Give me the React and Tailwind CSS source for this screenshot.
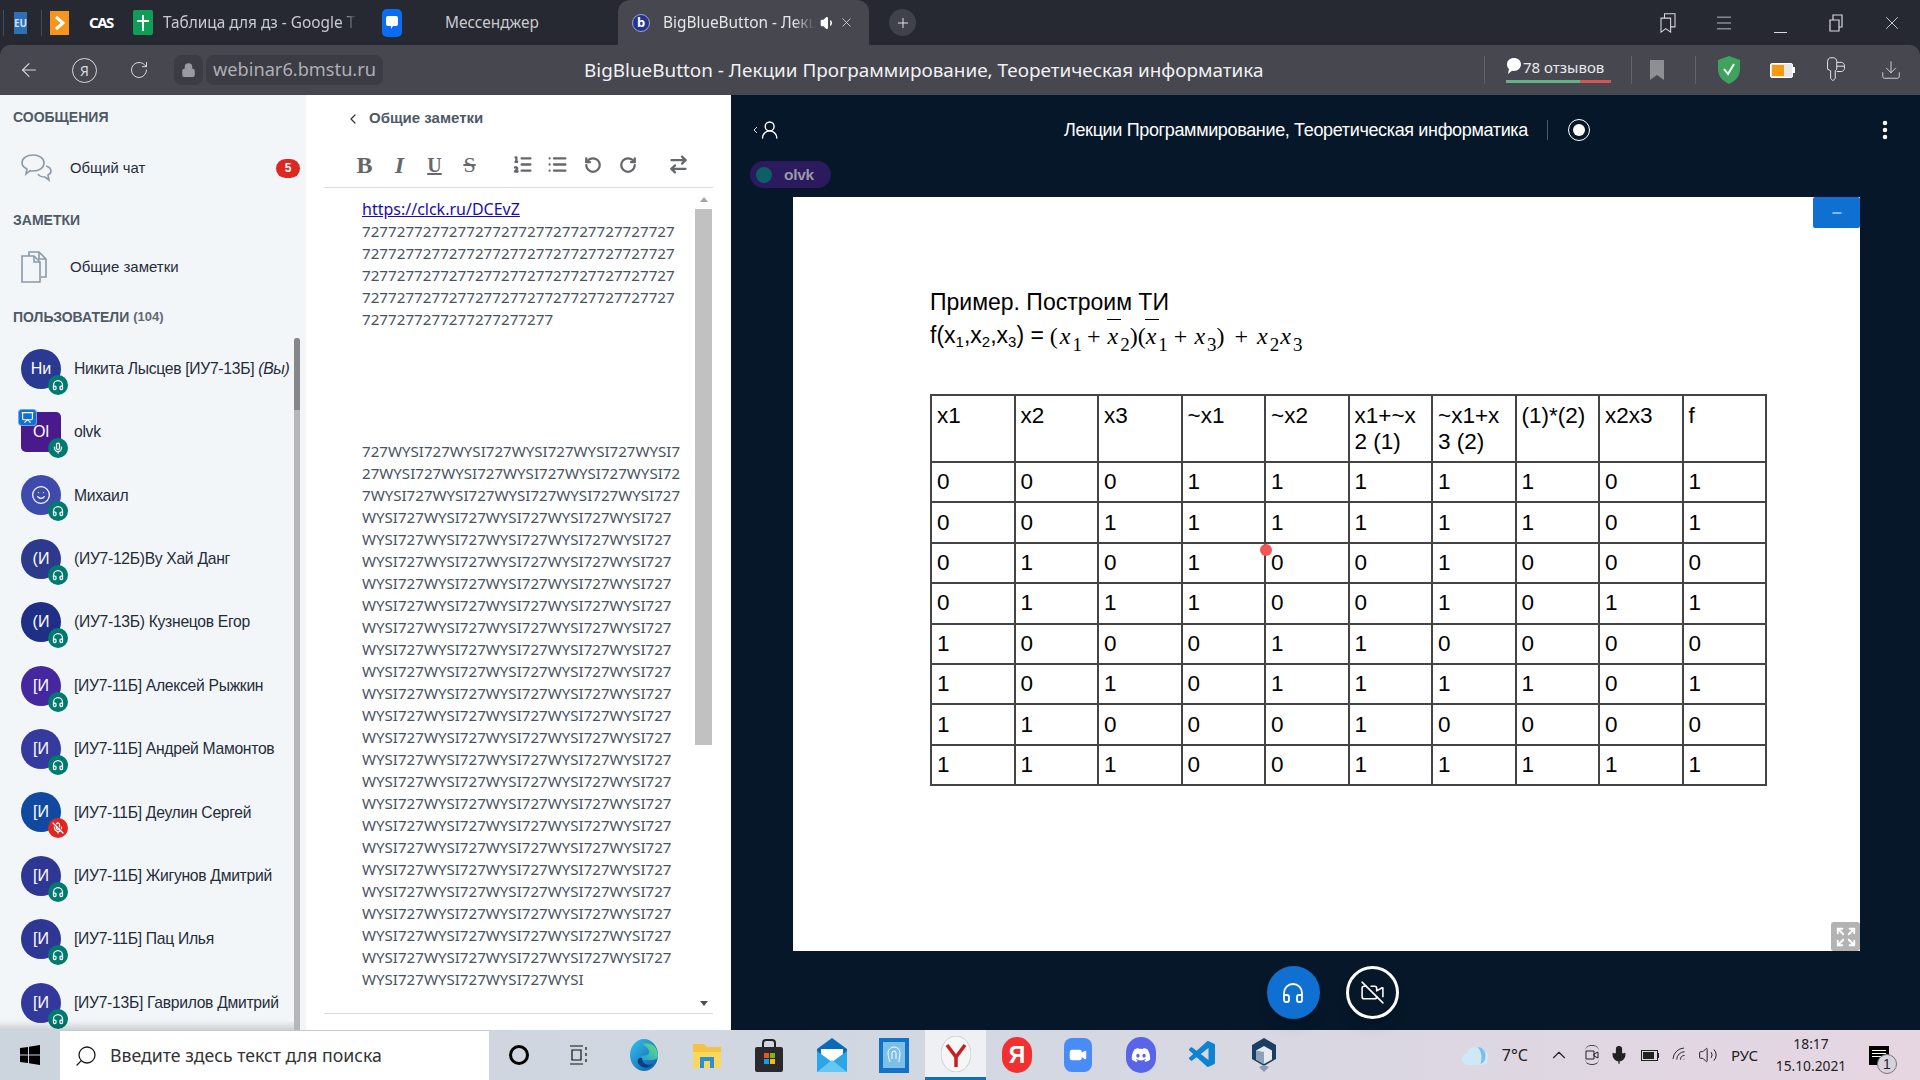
import React from "react";
import {
  ArrowLeft,
  RotateCw,
  RotateCcw,
  Lock,
  Plus,
  X,
  Minus,
  Volume1,
  ChevronLeft,
  ChevronUp,
  Headphones,
  Mic,
  MicOff,
  Presentation,
  Smile,
  VideoOff,
  Video,
  ListOrdered,
  List,
  ArrowRightLeft,
  Expand,
  EllipsisVertical,
  UserRound,
  Search,
  Download,
  Menu,
  Wifi,
  Volume2,
} from "lucide-react";
import { FaDiscord } from "react-icons/fa";
import { VscVscode } from "react-icons/vsc";

const TEAL = "bg-[#00796f]";

const USERS = [
  { short: "Ни", name: "Никита Лысцев [ИУ7-13Б]", you: true, color: "bg-[#2a3a92]" },
  { short: "Ol", name: "olvk", square: true, presenter: true, mic: true, color: "bg-[#4a1a8c]" },
  { short: "", name: "Михаил", smile: true, color: "bg-[#3f4aad]" },
  { short: "(И", name: "(ИУ7-12Б)Ву Хай Данг", color: "bg-[#2d3a8c]" },
  { short: "(И", name: "(ИУ7-13Б) Кузнецов Егор", color: "bg-[#1f2f85]" },
  { short: "[И", name: "[ИУ7-11Б] Алексей Рыжкин", color: "bg-[#4527a0]" },
  { short: "[И", name: "[ИУ7-11Б] Андрей Мамонтов", color: "bg-[#353a9e]" },
  { short: "[И", name: "[ИУ7-11Б] Деулин Сергей", muted: true, color: "bg-[#1148a0]" },
  { short: "[И", name: "[ИУ7-11Б] Жигунов Дмитрий", color: "bg-[#2f3795]" },
  { short: "[И", name: "[ИУ7-11Б] Пац Илья", color: "bg-[#2f3795]" },
  { short: "[И", name: "[ИУ7-13Б] Гаврилов Дмитрий", color: "bg-[#33399c]" },
];

const DIGIT_LINE = "727727727727727727727727727727727727";
const DIGITS = [DIGIT_LINE, DIGIT_LINE, DIGIT_LINE, DIGIT_LINE, "7277277277277277277277"];

const WYSI_FULL = "WYSI727WYSI727WYSI727WYSI727WYSI727";
const WYSI = [
  "727WYSI727WYSI727WYSI727WYSI727WYSI7",
  "27WYSI727WYSI727WYSI727WYSI727WYSI72",
  "7WYSI727WYSI727WYSI727WYSI727WYSI727",
  ...Array(21).fill(WYSI_FULL),
  "WYSI727WYSI727WYSI727WYSI",
];

const HEAD = [["x1"], ["x2"], ["x3"], ["~x1"], ["~x2"], ["x1+~x", "2 (1)"], ["~x1+x", "3 (2)"], ["(1)*(2)"], ["x2x3"], ["f"]];
const ROWS = [
  [0, 0, 0, 1, 1, 1, 1, 1, 0, 1],
  [0, 0, 1, 1, 1, 1, 1, 1, 0, 1],
  [0, 1, 0, 1, 0, 0, 1, 0, 0, 0],
  [0, 1, 1, 1, 0, 0, 1, 0, 1, 1],
  [1, 0, 0, 0, 1, 1, 0, 0, 0, 0],
  [1, 0, 1, 0, 1, 1, 1, 1, 0, 1],
  [1, 1, 0, 0, 0, 1, 0, 0, 0, 0],
  [1, 1, 1, 0, 0, 1, 1, 1, 1, 1],
];

const Divider = () => <span className="w-px h-[26px] bg-[#4a4c55]" />;

const TabBar = () => (
  <div className="h-[45px] shrink-0 bg-[#262932] flex items-center text-[#c9cad0] text-[15.400px] pl-[3px]">
    <span className="w-px h-[26px] bg-[#4a4c55] mr-[10px]" />
    <span className="w-[13px] h-[22px] bg-[#2f6fb5] text-[10px] font-bold leading-[22px] text-center text-[#cfe0f5]">EU</span>
    <span className="w-[14px]" />
    <Divider />
    <span className="ml-[8px] w-[19px] h-[24px] bg-[#f7941d] flex items-center justify-center">
      <svg width="12" height="16" viewBox="0 0 12 16" fill="none" stroke="#fff" strokeWidth="3"><path d="M2 2l7 6-7 6" /></svg>
    </span>
    <span className="ml-[12px]"><Divider /></span>
    <span className="ml-[8px] w-[22px] text-white font-bold text-[15px] tracking-[-1.500px]">CAS</span>
    <span className="ml-[10px]"><Divider /></span>
    <span className="ml-[12px] w-[20px] h-[25px] rounded-[2px] bg-[#0f9d58] flex items-center justify-center">
      <svg width="12" height="16" viewBox="0 0 12 16" fill="#fff"><path d="M5 0h2v5h5v2H7v9H5V7H0V5h5z" /></svg>
    </span>
    <span className="ml-[10px] w-[194px] overflow-hidden whitespace-nowrap [mask-image:linear-gradient(to_right,black_92%,transparent)]">Таблица для дз - Google Т</span>
    <span className="ml-[11px]"><Divider /></span>
    <span className="ml-[14px] w-[20px] h-[28px] rounded-[5px] bg-[#0a6cf0] flex items-center justify-center">
      <svg width="12" height="14" viewBox="0 0 12 14" fill="#fff"><path d="M2 0h8a2 2 0 012 2v6a2 2 0 01-2 2H7l-2 3V10H2a2 2 0 01-2-2V2a2 2 0 012-2z" /></svg>
    </span>
    <span className="ml-[43px] w-[173px] whitespace-nowrap">Мессенджер</span>
    <div className="w-[251px] h-full rounded-t-[12px] bg-[#46474f] flex items-center pl-[14px]">
      <span className="w-[18px] h-[18px] rounded-full bg-[#27348b] border border-[#9aa3d8] text-white text-[13px] font-bold leading-[15px] text-center">b</span>
      <span className="ml-[13px] w-[153px] overflow-hidden whitespace-nowrap text-[#e6e6e9] [mask-image:linear-gradient(to_right,black_85%,transparent)]">BigBlueButton - Лекции</span>
      <Volume1 className="ml-[4px] w-[16px] h-[16px] text-white" fill="#fff" />
      <X className="ml-[3px] w-[15px] h-[15px] text-[#d5d5d9]" strokeWidth={1.4} />
    </div>
    <span className="ml-[20px] w-[27px] h-[27px] rounded-full bg-[#40424b] flex items-center justify-center">
      <Plus className="w-[16px] h-[16px] text-[#e0e0e4]" strokeWidth={1.5} />
    </span>
    <div className="ml-auto flex items-center pr-[17px] text-[#d8d9dd]">
      <svg width="18" height="21" viewBox="0 0 20 24" fill="none" stroke="currentColor" strokeWidth="1.200">
        <path d="M2 7h11v16l-5.500-4L2 23z" />
        <path d="M6 7V2h12v15h-5" />
      </svg>
      <Menu className="ml-[37px] w-[20px] h-[20px]" strokeWidth={1} />
      <span className="ml-[36px] w-[20px] h-[20px] flex items-end"><span className="w-[13px] h-px bg-current ml-[4px]" /></span>
      <svg className="ml-[36px]" width="20" height="20" viewBox="0 0 20 20" fill="none" stroke="currentColor" strokeWidth="1.200">
        <path d="M4 7h9v11H4z" />
        <path d="M7 7V2h9v12h-3" />
      </svg>
      <X className="ml-[35px] w-[22px] h-[22px]" strokeWidth={1} />
    </div>
  </div>
);

const AddressBar = () => (
  <div className="h-[50px] shrink-0 bg-[#46474f] rounded-t-[10px] flex items-center relative text-[#d8d9dd]">
    <ArrowLeft className="ml-[18px] w-[22px] h-[22px]" strokeWidth={1.2} />
    <span className="ml-[32px] w-[25px] h-[25px] rounded-full border border-current text-[14px] leading-[23px] text-center">Я</span>
    <RotateCw className="ml-[32px] w-[20px] h-[22px]" strokeWidth={1.2} />
    <span className="ml-[25px] w-[29px] h-[30px] rounded-[8px] bg-[#3b3c44] flex items-center justify-center">
      <Lock className="w-[15px] h-[16px] text-[#9a9ba2]" fill="#9a9ba2" />
    </span>
    <span className="ml-[3px] w-[177px] h-[30px] rounded-[8px] bg-[#3b3c44] text-[#aeafb5] text-[18.200px] leading-[29px] text-center whitespace-nowrap">webinar6.bmstu.ru</span>
    <span className="ml-[201px] text-[#f1f1f3] text-[18.900px] whitespace-nowrap">BigBlueButton - Лекции Программирование, Теоретическая информатика</span>
    <div className="ml-auto flex items-center">
      <span className="w-px h-[28px] bg-[#62636b]" />
      <div className="ml-[21px] w-[105px] flex flex-col">
        <div className="flex items-center text-[#e9e9ec] text-[15px] leading-[19px] whitespace-nowrap">
          <svg width="16" height="18" viewBox="0 0 16 18" fill="#fff"><path d="M8 0c4 0 7 2.600 7 6.300S12 13 8 13c-.8 0-1.500-.1-2-.2L2 16l1-5C1.500 9.800 1 8 1 6.300 1 2.600 4 0 8 0z" /></svg>
          <span className="ml-[1px]">78 отзывов</span>
        </div>
        <div className="mt-[3px] h-[3px] flex">
          <span className="w-[74px] bg-[#62b385]" />
          <span className="flex-1 bg-[#d9534f]" />
        </div>
      </div>
      <span className="ml-[20px] w-px h-[28px] bg-[#62636b]" />
      <svg className="ml-[18px]" width="14" height="20" viewBox="0 0 14 20" fill="#8e8f95"><path d="M0 0h14v20l-7-5-7 5z" /></svg>
      <span className="ml-[31px] w-px h-[28px] bg-[#62636b]" />
      <svg className="ml-[18px]" width="30" height="30" viewBox="0 0 30 30">
        <path d="M15 1l11 4v9c0 8-5 12-11 15C9 26 4 22 4 14V5z" fill="#3fa35f" />
        <path d="M10 14l4 5 6-10" fill="none" stroke="#fff" strokeWidth="2" />
      </svg>
      <span className="ml-[26px] w-[23px] h-[15px] rounded-[2px] border border-white bg-[#e8e8e8] flex items-stretch p-[1px] pr-[8px]">
        <span className="flex-1 bg-[#f39c12]" />
      </span>
      <span className="w-[2px] h-[6px] bg-white" />
      <svg className="ml-[30px]" width="22" height="26" viewBox="0 0 26 34" fill="none" stroke="#e6e6e9" strokeWidth="1.300">
        <path d="M2 6c0-3 2-5 4-5h4c2 0 4 2 4 5v10l-2 2v10l-3 3-3-3V18l-4-2z" />
        <path d="M14 7h6c2 0 4 2 4 4v4c0 2-2 4-4 4h-6M14 12h10" />
      </svg>
      <Download className="ml-[33px] mr-[18px] w-[22px] h-[22px]" strokeWidth={1} />
    </div>
  </div>
);

const UserRow = ({ user }) => (
  <div className="h-[63.4px] shrink-0 flex items-center pl-[21px]">
    <div className={`relative w-[40px] h-[40px] flex items-center justify-center text-white text-[16px] ${user.color} ${user.square ? "rounded-[5px]" : "rounded-full"}`}>
      {user.smile ? <Smile className="w-[20px] h-[20px]" strokeWidth={1.5} /> : user.short}
      {user.presenter && (
        <span className="absolute -left-[3px] -top-[3px] w-[19px] h-[17px] rounded-[4px] bg-[#0f70d7] border border-white/40 flex items-center justify-center">
          <Presentation className="w-[13px] h-[13px]" strokeWidth={2} />
        </span>
      )}
      <span className={`absolute -right-[7px] -bottom-[6px] w-[20px] h-[20px] rounded-full flex items-center justify-center ${user.muted ? "bg-[#df2721]" : TEAL}`}>
        {user.muted ? (
          <MicOff className="w-[12px] h-[12px]" strokeWidth={2.5} />
        ) : user.mic ? (
          <Mic className="w-[12px] h-[12px]" strokeWidth={2.5} />
        ) : (
          <Headphones className="w-[12px] h-[12px]" strokeWidth={2.5} />
        )}
      </span>
    </div>
    <span className="ml-[13px] text-[15.700px] tracking-[-0.3px] text-[#1f2d3a] whitespace-nowrap">
      {user.name}
      {user.you && <i> (Вы)</i>}
    </span>
  </div>
);

const Sidebar = () => (
  <aside className="w-[306px] shrink-0 bg-[#f3f6f9] flex flex-col relative overflow-hidden">
    <div className="h-[45px] shrink-0 flex items-center pl-[13px] text-[14px] font-bold text-[#4e5a66]">СООБЩЕНИЯ</div>
    <div className="h-[56px] shrink-0 flex items-center pl-[21px] text-[14.800px] text-[#1f2d3a]">
      <svg width="32" height="30" viewBox="0 0 32 30" fill="none" stroke="#8b99a8" strokeWidth="1.6">
        <path d="M12 2c6 0 11 3 11 8s-5 8-11 8c-1 0-2 0-3-.3L5 21l1-5c-3-1.500-5-3.500-5-6 0-5 5-8 11-8z" />
        <path d="M25 13c3 1 5 3 5 5 0 2-1 3-3 4l1 5-4-3c-3 0-6-1-7-3" />
      </svg>
      <span className="ml-[17px]">Общий чат</span>
      <span className="ml-auto mr-[6px] w-[24px] h-[19px] rounded-full bg-[#df2721] text-white text-[12px] font-bold leading-[19px] text-center">5</span>
    </div>
    <div className="h-[46px] shrink-0 pt-[2px] flex items-center pl-[13px] text-[14px] font-bold text-[#4e5a66]">ЗАМЕТКИ</div>
    <div className="h-[50px] shrink-0 flex items-center pl-[21px] text-[15px] text-[#1f2d3a]">
      <svg width="26" height="32" viewBox="0 0 26 32" fill="none" stroke="#8b99a8" strokeWidth="1.6">
        <path d="M8 5V1h10l7 7v18h-5" />
        <path d="M1 5h12l6 6v20H1z" />
        <path d="M18 1v7h7M13 5v6h6" />
      </svg>
      <span className="ml-[23px]">Общие заметки</span>
    </div>
    <div className="h-[45px] shrink-0 pt-[5px] flex items-center pl-[13px] text-[14px] font-bold text-[#4e5a66]">
      ПОЛЬЗОВАТЕЛИ<span className="ml-[4px] text-[13px] text-[#5f6a75]">(104)</span>
    </div>
    <div className="flex-1 min-h-0 overflow-hidden flex flex-col">
      {USERS.map((u) => (
        <UserRow key={u.name} user={u} />
      ))}
    </div>
    {/* list scrollbar */}
    <div className="absolute left-[294px] top-[243px] bottom-0 w-[6px] rounded-t-[3px] bg-[#b4b6ba]">
      <div className="h-[72px] rounded-t-[3px] bg-[#85878c]" />
    </div>
    <div className="absolute left-0 right-[12px] bottom-0 h-[10px] bg-gradient-to-b from-transparent to-black/15" />
  </aside>
);

const ToolBtn = ({ children, className = "" }) => (
  <span className={`w-[35px] h-[24px] flex items-center justify-center text-[#65676b] ${className}`}>{children}</span>
);

const NotesPanel = () => (
  <section className="w-[425px] shrink-0 bg-white flex flex-col px-[18px] pb-[16px]">
    <div className="h-[47px] shrink-0 flex items-center pl-[21px] text-[15px] font-bold text-[#4e5a66]">
      <ChevronLeft className="w-[16px] h-[16px] text-[#333]" strokeWidth={1.800} />
      <span className="ml-[8px]">Общие заметки</span>
    </div>
    <div className="h-[46px] shrink-0 flex items-center pl-[23px] border-b border-[#dcdcdc]">
      <ToolBtn><span className="font-['Liberation_Serif',serif] font-bold text-[24px]">B</span></ToolBtn>
      <ToolBtn><span className="font-['Liberation_Serif',serif] font-bold italic text-[24px]">I</span></ToolBtn>
      <ToolBtn><span className="font-['Liberation_Serif',serif] font-bold underline text-[20px]">U</span></ToolBtn>
      <ToolBtn><span className="font-['Liberation_Serif',serif] line-through text-[22px]">S</span></ToolBtn>
      <ToolBtn className="ml-[18px]"><ListOrdered className="w-[21px] h-[21px]" strokeWidth={2.6} /></ToolBtn>
      <ToolBtn><List className="w-[21px] h-[21px]" strokeWidth={2.6} /></ToolBtn>
      <ToolBtn><RotateCcw className="w-[18px] h-[18px]" strokeWidth={3} /></ToolBtn>
      <ToolBtn><RotateCw className="w-[18px] h-[18px]" strokeWidth={3} /></ToolBtn>
      <ToolBtn className="ml-[16px]"><ArrowRightLeft className="w-[21px] h-[21px]" strokeWidth={2.6} /></ToolBtn>
    </div>
    <div className="flex-1 min-h-0 flex border-b border-[#dcdcdc]">
      <div className="flex-1 min-w-0 pl-[38px] pt-[10px] font-['Noto_Sans',sans-serif] text-[15.200px] leading-[22px] text-[#46525e] whitespace-nowrap overflow-hidden">
        <a className="block text-[#1a0dab] underline text-[16px]">https://clck.ru/DCEvZ</a>
        {DIGITS.map((line, i) => (
          <div key={i}>{line}</div>
        ))}
        <div className="h-[110px]" />
        {WYSI.map((line, i) => (
          <div key={i} className="text-[15.100px]">{line}</div>
        ))}
      </div>
      <div className="w-[17px] mr-[1px] shrink-0 flex flex-col items-center">
        <span className="mt-[9px] w-0 h-0 border-x-[4px] border-x-transparent border-b-[5px] border-b-[#a3a3a3]" />
        <div className="mt-[7px] w-full h-[536px] bg-[#c1c1c1]" />
        <span className="mt-auto mb-[7px] w-0 h-0 border-x-[4px] border-x-transparent border-t-[5px] border-t-[#505050]" />
      </div>
    </div>
  </section>
);

const SERIF = "font-['Liberation_Serif',serif] text-[24px]";

const MathX = ({ sub, bar, className = "" }) => (
  <span className={`${SERIF} inline-flex items-baseline ${className}`}>
    <span className="relative italic">
      x
      {bar && <span className="absolute -left-[1px] -right-[3px] top-[1px] h-px bg-black" />}
    </span>
    <span className="ml-[2px] text-[19px] relative top-[7px]">{sub}</span>
  </span>
);

const Slide = () => (
  <div className="ml-[62px] w-[1067px] h-[754px] shrink-0 bg-white relative text-black">
    <div className="pl-[137px] pt-[90px] text-[23px] leading-[30px] whitespace-nowrap">Пример. Построим ТИ</div>
    <div className="pl-[137px] h-[37px] flex items-center text-[23px] whitespace-nowrap">
      <span>
        f(x<sub className="text-[15px] align-baseline relative top-[4px]">1</sub>,x<sub className="text-[15px] align-baseline relative top-[4px]">2</sub>,x<sub className="text-[15px] align-baseline relative top-[4px]">3</sub>) =
      </span>
      <span className={`${SERIF} ml-[6px]`}>(</span>
      <MathX sub="1" className="ml-[2px]" />
      <span className={`${SERIF} ml-[5px]`}>+</span>
      <MathX sub="2" bar className="ml-[7px]" />
      <span className={SERIF}>)(</span>
      <MathX sub="1" bar />
      <span className={`${SERIF} ml-[6px]`}>+</span>
      <MathX sub="3" className="ml-[7px]" />
      <span className={SERIF}>)</span>
      <span className={`${SERIF} ml-[10px]`}>+</span>
      <MathX sub="2" className="ml-[9px]" />
      <MathX sub="3" className="ml-[1px]" />
    </div>
    <table className="ml-[137px] mt-[40px] w-[837px] table-fixed border-collapse text-[22.500px] leading-[26px]">
      <thead>
        <tr className="h-[67px]">
          {HEAD.map((lines, i) => (
            <th key={i} className="border-2 border-[#444] font-normal text-left align-top px-[5px] pt-[7px] whitespace-nowrap">
              {lines.map((t) => (
                <div key={t}>{t}</div>
              ))}
            </th>
          ))}
        </tr>
      </thead>
      <tbody>
        {ROWS.map((row, r) => (
          <tr key={r} className="h-[40.4px]">
            {row.map((v, c) => (
              <td key={c} className="border-2 border-[#444] px-[5px] align-middle">{v}</td>
            ))}
          </tr>
        ))}
      </tbody>
    </table>
    <div className="absolute right-0 top-0 w-[47px] h-[31px] rounded-[2px] bg-[#1070d2] flex items-center justify-center text-white">
      <Minus className="w-[14px] h-[14px]" strokeWidth={2} />
    </div>
    <div className="absolute right-0 bottom-0 w-[29px] h-[29px] rounded-[3px] bg-[#b3b3b3] flex items-center justify-center text-white">
      <Expand className="w-[22px] h-[22px]" strokeWidth={2} />
    </div>
    {/* presenter cursor */}
    <span className="absolute left-[467px] top-[347px] w-[12px] h-[12px] rounded-full bg-[#f25555]" />
  </div>
);

const Stage = () => (
  <main className="flex-1 min-w-0 bg-[#06172a] flex flex-col text-white relative">
    <div className="h-[66px] shrink-0 pt-[4px] flex items-center relative">
      <span className="ml-[19px] w-[30px] flex items-center">
        <ChevronLeft className="w-[11px] h-[16px] -mr-[2px]" strokeWidth={2} />
        <UserRound className="w-[22px] h-[22px]" strokeWidth={1.6} />
      </span>
      <span className="ml-[284px] text-[18px] tracking-[-0.35px] whitespace-nowrap">Лекции Программирование, Теоретическая информатика</span>
      <span className="ml-[19px] w-px h-[20px] bg-[#4b5a69]" />
      <span className="ml-[20px] w-[22px] h-[22px] rounded-full border-[1.500px] border-white flex items-center justify-center">
        <span className="w-[12px] h-[12px] rounded-full bg-white" />
      </span>
      <EllipsisVertical className="ml-auto mr-[23px] w-[24px] h-[24px]" strokeWidth={2.5} />
    </div>
    <div className="h-[27px] shrink-0 ml-[19px] w-[81px] rounded-full bg-[#2b1a5e] flex items-center pl-[6px]">
      <span className="w-[16px] h-[16px] rounded-full bg-[#0c5f66]" />
      <span className="ml-[12px] text-[15.500px] font-bold tracking-[-0.3px] text-[#9a98a8]">olvk</span>
    </div>
    <div className="h-[9px] shrink-0" />
    <Slide />
    <div className="flex-1 flex items-center justify-center gap-[26px] pl-[14px] pt-[4px]">
      <span className="w-[53px] h-[53px] rounded-full bg-[#1070d2] shadow-lg flex items-center justify-center">
        <Headphones className="w-[24px] h-[24px]" strokeWidth={1.800} />
      </span>
      <span className="w-[53px] h-[53px] rounded-full border-[3px] border-white shadow-lg flex items-center justify-center">
        <VideoOff className="w-[25px] h-[25px]" strokeWidth={1.500} />
      </span>
    </div>
  </main>
);

const Taskbar = () => (
  <footer className="h-[50px] shrink-0 bg-gradient-to-r from-[#ccd4de] via-[#d2d8e2] to-[#e6d6e2] flex items-center text-[#1a1a1a]">
    <span className="w-[60px] flex justify-center">
      <svg width="20" height="20" viewBox="0 0 20 20" fill="#000"><path d="M0 3l8-1v7.500H0zM9 1.800L20 0v9.500H9zM0 10.500h8V18l-8-1zM9 10.500h11V20L9 18.200z" /></svg>
    </span>
    <div className="w-[429px] h-full bg-white border-t border-[#c4c8d0] flex items-center pl-[14px]">
      <Search className="w-[24px] h-[24px] -scale-x-100" strokeWidth={1.300} />
      <span className="ml-[12px] text-[17.700px] font-['Noto_Sans',sans-serif] text-[#333] whitespace-nowrap">Введите здесь текст для поиска</span>
    </div>
    <span className="ml-[20px] w-[20px] h-[20px] rounded-full border-[3px] border-black" />
    <svg className="ml-[40px]" width="20" height="20" viewBox="0 0 20 20" fill="none" stroke="#111" strokeWidth="1.200">
      <path d="M1 1h13M1 19h13M3 5h9v10H3zM17 2v3M17 8v3M17 14v3" />
    </svg>
    {/* edge */}
    <svg className="ml-[41px]" width="28" height="32" viewBox="0 0 28 32">
      <defs>
        <linearGradient id="edgeA" x1="0" y1="0" x2="1" y2="1">
          <stop offset="0" stopColor="#35c1f1" />
          <stop offset="1" stopColor="#0c59a4" />
        </linearGradient>
        <linearGradient id="edgeB" x1="0" y1="1" x2="1" y2="0">
          <stop offset="0" stopColor="#1b9de2" />
          <stop offset="1" stopColor="#6ee06e" />
        </linearGradient>
      </defs>
      <ellipse cx="14" cy="16" rx="14" ry="16" fill="url(#edgeA)" />
      <path d="M12 5c8-3 16 2 16 12 0 3-3 4-7 4H10c0-6 7-3 9-7 1-3-3-7-7-9z" fill="url(#edgeB)" />
      <path d="M12 19c0 6 6 8 11 6-4 5-12 5-15-1-1-3 1-6 4-5z" fill="#0c3f80" />
    </svg>
    {/* explorer folder */}
    <svg className="ml-[35px]" width="28" height="26" viewBox="0 0 28 26">
      <path d="M0 2h11l3 3h14v21H0z" fill="#f5c242" />
      <path d="M0 10h28v16H0z" fill="#fbd75b" />
      <path d="M7 15h14v11h-4v-7h-6v7H7z" fill="#2a8fd8" />
    </svg>
    {/* store */}
    <svg className="ml-[34px]" width="28" height="33" viewBox="0 0 28 33">
      <path d="M8 9V4a3 3 0 013-3h6a3 3 0 013 3v5" fill="none" stroke="#222" strokeWidth="2" />
      <rect x="0" y="8" width="28" height="25" rx="2" fill="#2a2a2e" />
      <rect x="9" y="14" width="5" height="5" fill="#f25022" />
      <rect x="15" y="14" width="5" height="5" fill="#7fba00" />
      <rect x="9" y="20" width="5" height="5" fill="#00a4ef" />
      <rect x="15" y="20" width="5" height="5" fill="#ffb900" />
    </svg>
    {/* mail */}
    <svg className="ml-[34px]" width="30" height="34" viewBox="0 0 30 34">
      <path d="M15 0l15 11v23H0V11z" fill="#0a6ab8" />
      <path d="M4 11h22v10L15 27 4 21z" fill="#fff" />
      <path d="M0 13l15 11 15-11v21H0z" fill="#2aa5e8" />
      <path d="M0 34l15-12 15 12z" fill="#66c7f2" />
    </svg>
    {/* blue app */}
    <span className="ml-[32px] w-[30px] h-[35px] bg-[#1172c8] flex items-center justify-center">
      <span className="w-[22px] h-[26px] bg-[#7cc0e8] flex items-center justify-center">
        <svg width="14" height="20" viewBox="0 0 14 20" fill="none" stroke="#fff" strokeWidth="1"><path d="M3 17c-1-4-2-5-2-9a6 6 0 0112 0c0 3-1 5-1 9M5 14V8a2 2 0 014 0v6" /></svg>
      </span>
    </span>
    {/* yandex browser, active */}
    <span className="ml-[16px] w-[61px] h-full bg-[#eef0f4] border-b-[3px] border-[#0c6fc0] flex items-center justify-center">
      <svg width="30" height="36" viewBox="0 0 30 36">
        <ellipse cx="15" cy="18" rx="15" ry="18" fill="#f6f6f6" stroke="#cfcfcf" />
        <path d="M6 9l9 12 9-12M15 21v10" fill="none" stroke="#c81e24" strokeWidth="3.500" />
      </svg>
    </span>
    {/* yandex */}
    <span className="ml-[16px] w-[30px] h-[36px] rounded-full bg-[#f23030] text-white text-[23px] font-bold leading-[36px] text-center">Я</span>
    {/* zoom */}
    <span className="ml-[32px] w-[28px] h-[34px] rounded-[8px] bg-[#4a8cf7] flex items-center justify-center">
      <Video className="w-[18px] h-[18px] text-white" fill="#fff" />
    </span>
    {/* discord */}
    <span className="ml-[34px] w-[30px] h-[36px] rounded-full bg-[#5865e8] flex items-center justify-center">
      <FaDiscord className="w-[20px] h-[20px] text-white" />
    </span>
    <VscVscode className="ml-[31px] w-[32px] h-[36px] text-[#0e83cf]" />
    {/* virtualbox */}
    <svg className="ml-[32px]" width="26" height="36" viewBox="0 0 26 36">
      <path d="M13 1l12 7v14l-12 7L1 22V8z" fill="#1d3e63" />
      <path d="M13 9l8 4.500v9L13 27l-8-4.500v-9z" fill="#e6e9ee" />
      <path d="M13 15v12l-8-4.500v-9z" fill="#8da2b8" />
      <path d="M8 30l5 5 5-5-5-2z" fill="#8c9cb0" />
    </svg>
    <div className="ml-auto flex items-center text-[#222]">
      <svg width="27" height="22" viewBox="0 0 26 22">
        <path d="M7 21a6 6 0 01-1-12 8 8 0 0115-2 7 7 0 01-1 14z" fill="#cfe8f8" />
        <path d="M16 3c5 0 8 4 8 9 0 4-2 7-5 8 2-6 1-13-3-17z" fill="#7fbde8" />
      </svg>
      <span className="ml-[14px] text-[16px] font-['Noto_Sans',sans-serif]">7°C</span>
      <ChevronUp className="ml-[20px] w-[22px] h-[22px]" strokeWidth={1.200} />
      <span className="ml-[15px] w-[14px] h-[20px] border-y border-[#444] rounded-[6px] flex items-center">
        <svg width="14" height="12" viewBox="0 0 14 12" fill="none" stroke="#222"><path d="M1 2h8v8H1zM9 5l4-2v6l-4-2z" /></svg>
      </span>
      <Mic className="ml-[10px] w-[20px] h-[24px]" strokeWidth={1.500} fill="#222" />
      <span className="ml-[12px] w-[17px] h-[11px] border border-[#222] p-[1px] pr-[3px] flex">
        <span className="flex-1 bg-[#222]" />
      </span>
      <span className="w-px h-[5px] bg-[#222]" />
      <Wifi className="ml-[12px] w-[18px] h-[18px] -rotate-45" strokeWidth={1.200} />
      <Volume2 className="ml-[9px] w-[20px] h-[20px]" strokeWidth={1.200} />
      <span className="ml-[13px] text-[15px] font-['Noto_Sans',sans-serif]">РУС</span>
      <div className="ml-[17px] w-[72px] text-center text-[13.800px] leading-[22px] font-['Noto_Sans',sans-serif]">
        <div>18:17</div>
        <div>15.10.2021</div>
      </div>
      <span className="relative ml-[22px] mr-[31px] w-[20px] h-[19px] bg-black flex flex-col gap-[2px] p-[3px] pt-[4px]">
        <span className="h-px bg-white" />
        <span className="h-px bg-white" />
        <span className="h-px bg-white" />
        <span className="absolute -right-[8px] -bottom-[9px] w-[20px] h-[20px] rounded-full bg-[#d7d2dc] border border-[#777] text-[14px] leading-[18px] text-center">1</span>
      </span>
    </div>
  </footer>
);

export default function App() {
  return (
    <div className="w-[1920px] h-screen overflow-hidden flex flex-col font-['Liberation_Sans',Arial,sans-serif] bg-[#262932]">
      <div className="font-['Noto_Sans',sans-serif]">
        <TabBar />
        <AddressBar />
      </div>
      <div className="flex-1 min-h-0 flex">
        <Sidebar />
        <NotesPanel />
        <Stage />
      </div>
      <Taskbar />
    </div>
  );
}
